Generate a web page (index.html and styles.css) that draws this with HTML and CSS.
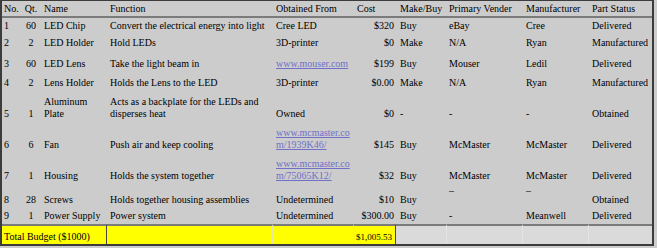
FILE: index.html
```html
<!DOCTYPE html>
<html>
<head>
<meta charset="utf-8">
<link rel="stylesheet" href="styles.css">
</head>
<body>
<table class="parts">
  <colgroup>
    <col class="c-no"><col class="c-qt"><col class="c-name"><col class="c-func"><col class="c-from">
    <col class="c-cost"><col class="c-mb"><col class="c-vend"><col class="c-manu"><col class="c-stat">
  </colgroup>
  <thead>
    <tr class="head">
      <th class="no">No.</th><th class="qt">Qt.</th><th>Name</th><th>Function</th><th>Obtained From</th>
      <th>Cost</th><th class="mb">Make/Buy</th><th class="vend">Primary Vender</th><th>Manufacturer</th><th>Part Status</th>
    </tr>
  </thead>
  <tbody>
    <tr class="r1">
      <td class="no">1</td><td class="qt">60</td><td>LED Chip</td><td>Convert the electrical energy into light</td><td>Cree LED</td>
      <td class="cost">$320</td><td class="mb">Buy</td><td class="vend">eBay</td><td>Cree</td><td>Delivered</td>
    </tr>
    <tr class="r2">
      <td class="no">2</td><td class="qt">2</td><td>LED Holder</td><td>Hold LEDs</td><td>3D-printer</td>
      <td class="cost">$0</td><td class="mb">Make</td><td class="vend">N/A</td><td>Ryan</td><td>Manufactured</td>
    </tr>
    <tr class="r3">
      <td class="no">3</td><td class="qt">60</td><td>LED Lens</td><td>Take the light beam in</td><td><a href="#">www.mouser.com</a></td>
      <td class="cost">$199</td><td class="mb">Buy</td><td class="vend">Mouser</td><td>Ledil</td><td>Delivered</td>
    </tr>
    <tr class="r4">
      <td class="no">4</td><td class="qt">2</td><td>Lens Holder</td><td>Holds the Lens to the LED</td><td>3D-printer</td>
      <td class="cost">$0.00</td><td class="mb">Make</td><td class="vend">N/A</td><td>Ryan</td><td>Manufactured</td>
    </tr>
    <tr class="r5">
      <td class="no">5</td><td class="qt">1</td><td>Aluminum Plate</td><td>Acts as a backplate for the LEDs and disperses heat</td><td>Owned</td>
      <td class="cost">$0</td><td class="mb">-</td><td class="vend">-</td><td>-</td><td>Obtained</td>
    </tr>
    <tr class="r6">
      <td class="no">6</td><td class="qt">6</td><td>Fan</td><td>Push air and keep cooling</td><td><a href="#">www.mcmaster.co<wbr>m/1939K46/</a></td>
      <td class="cost">$145</td><td class="mb">Buy</td><td class="vend">McMaster</td><td>McMaster</td><td>Delivered</td>
    </tr>
    <tr class="r7">
      <td class="no">7</td><td class="qt">1</td><td>Housing</td><td>Holds the system together</td><td><a href="#">www.mcmaster.co<wbr>m/75065K12/</a></td>
      <td class="cost">$32</td><td class="mb">Buy</td><td class="vend">McMaster</td><td>McMaster</td><td>Delivered</td>
    </tr>
    <tr class="r8">
      <td class="no">8</td><td class="qt">28</td><td>Screws</td><td>Holds together housing assemblies</td><td>Undetermined</td>
      <td class="cost">$10</td><td class="mb">Buy</td><td class="vend top">–</td><td class="top">–</td><td>Obtained</td>
    </tr>
    <tr class="r9">
      <td class="no">9</td><td class="qt">1</td><td>Power Supply</td><td>Power system</td><td>Undetermined</td>
      <td class="cost">$300.00</td><td class="mb">Buy</td><td class="vend">-</td><td>Meanwell</td><td>Delivered</td>
    </tr>
  </tbody>
  <tfoot>
    <tr class="total">
      <td colspan="3" class="y lbl">Total Budget ($1000)</td>
      <td class="y"></td>
      <td class="y"></td>
      <td class="y sum">$1,005.53</td>
      <td class="g"></td>
      <td class="g"></td>
      <td class="g"></td>
      <td class="g last"></td>
    </tr>
  </tfoot>
</table>
</body>
</html>
```

FILE: styles.css
```css
html, body {
  margin: 0;
  padding: 0;
  background: #cdcdcd;
}

.parts {
  border-collapse: separate;
  border-spacing: 0;
  table-layout: fixed;
  width: 654px;
  border-style: solid;
  border-color: #3c3c3c;
  border-width: 1px 2px 2px 2px;
  background: #cccccc;
  font-family: "Liberation Serif", "Times New Roman", serif;
  font-size: 10px;
  line-height: 12px;
  color: #000;
}

.c-no { width: 19px; }
.c-qt { width: 20px; }
.c-name { width: 66px; }
.c-func { width: 166px; }
.c-from { width: 81px; }
.c-cost { width: 42px; }
.c-mb { width: 51px; }
.c-vend { width: 76px; }
.c-manu { width: 66px; }
.c-stat { width: 63px; }

th, td {
  padding: 0 3px 2px 3px;
  text-align: left;
  vertical-align: bottom;
  font-weight: normal;
  overflow: hidden;
}

.head th {
  height: 15px;
  padding: 0 3px;
  vertical-align: middle;
  white-space: nowrap;
  border-bottom: 2px solid #7b7b7b;
}

th.no, td.no { padding-left: 2px; padding-right: 0; }
th.qt, td.qt { text-align: center; padding: 0 0 2px 0; }
.head th.qt { padding: 0; }
th.mb, td.mb { padding-left: 4px; }
th.vend, td.vend { padding-left: 2px; }
td.cost { text-align: right; padding-right: 2px; }
td.top { vertical-align: top; padding-top: 1px; }

a {
  color: #7070c8;
  text-decoration: underline;
}

.r1 td { height: 14px; }
.r2 td { height: 15px; }
.r3 td { height: 19px; }
.r4 td { height: 17px; }
.r5 td { height: 29px; }
.r6 td { height: 29px; }
.r7 td { height: 29px; }
.r8 td { height: 21px; }
.r9 td { height: 14px; }

.total td {
  height: 17px;
  padding: 0 3px 1px 3px;
  border-top: 2px solid #7b7b7b;
}
.total .y {
  background: #ffff00;
  border-right: 1px solid #e6e6a8;
}
.total .g {
  background: #dadada;
  border-right: 1px solid #e4e4e4;
}
.total .g.last { border-right: 0; }
.total .lbl {
  padding-left: 2px;
  border-right: 1px solid #444;
}
.total .sum {
  font-size: 9px;
  padding-left: 2px;
  padding-right: 0;
  border-right: 1px solid #444;
}
```
